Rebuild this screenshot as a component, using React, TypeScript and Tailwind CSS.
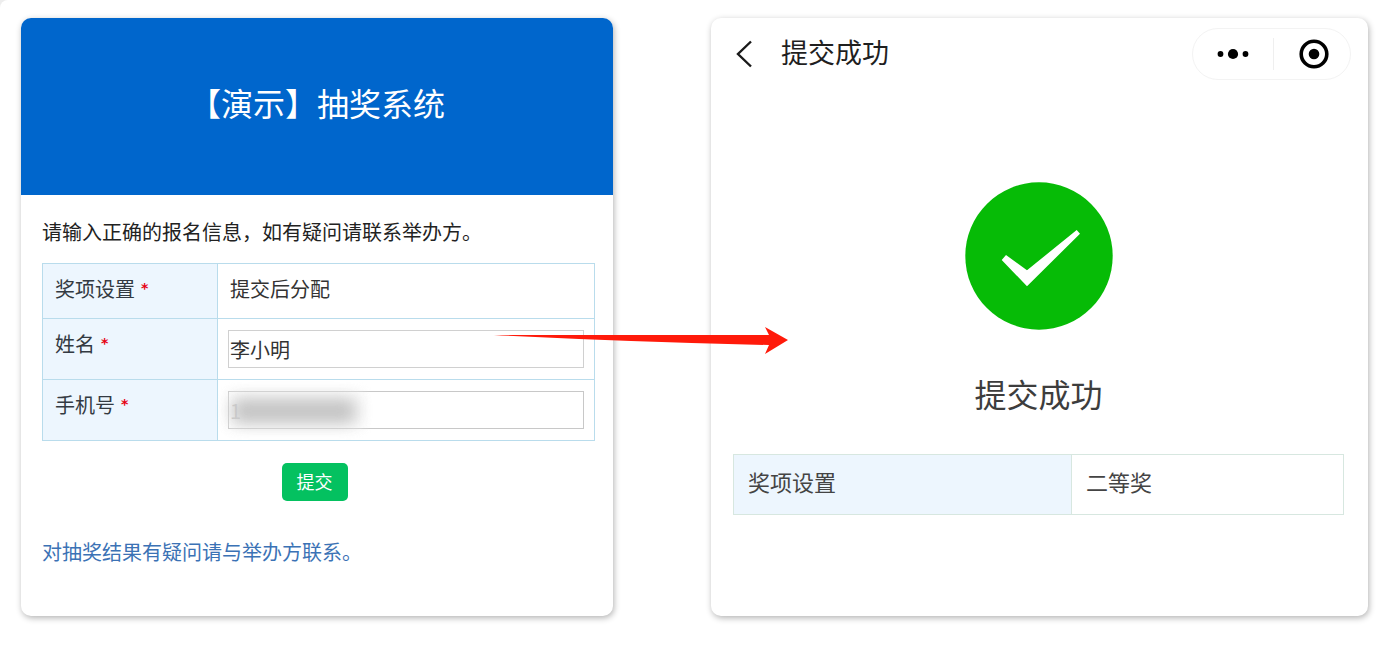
import React, { useState } from 'react';

const CARD =
  'relative rounded-[10px] bg-white shadow-[1px_2px_6px_rgba(0,0,0,0.3)]';

const LABEL_CELL =
  'w-[175px] border border-[#b9dcec] bg-[#edf6fe] pl-3 pt-3 text-left align-top font-normal leading-[26px] text-[#333a42]';

const Required: React.FC = () => (
  <span className="ml-[6px] align-[4px] font-['DejaVu_Sans'] text-[14px] font-bold leading-none text-[#e60012]">
    *
  </span>
);

const Arrow: React.FC = () => (
  <svg
    className="pointer-events-none absolute -right-[175px] top-[308px] z-10"
    width="296"
    height="30"
    viewBox="0 0 296 30"
    aria-hidden="true"
  >
    <path d="M2 9 L277 9 L273 1 L296 14 L273 28 L277 19 Q140 16 2 9Z" fill="#ff1a0a" />
  </svg>
);

const SignupCard: React.FC = () => {
  const [name, setName] = useState('李小明');
  const [phone, setPhone] = useState('1');

  return (
    <section className={CARD}>
      <header className="flex h-[177px] items-center justify-center rounded-t-[10px] bg-[#0066cc] pb-[10px]">
        <h1 className="text-[32px] leading-10 text-white">【演示】抽奖系统</h1>
      </header>

      <form
        className="pb-[49px] pl-[21px] pr-[18px] pt-[22px] text-[20px] leading-[30px]"
        onSubmit={(e) => e.preventDefault()}
      >
        <p className="text-[#222]">请输入正确的报名信息，如有疑问请联系举办方。</p>

        <table className="mt-4 w-full table-fixed border-collapse text-[#333]">
          <tbody>
            <tr className="h-[55px]">
              <th scope="row" className={LABEL_CELL}>
                奖项设置
                <Required />
              </th>
              <td className="border border-[#b9dcec] pl-3 pt-3 align-top leading-[26px]">提交后分配</td>
            </tr>
            <tr className="h-[61px]">
              <th scope="row" className={LABEL_CELL}>
                <label htmlFor="name">姓名</label>
                <Required />
              </th>
              <td className="border border-[#b9dcec] px-[10px] py-[11px]">
                <input
                  id="name"
                  value={name}
                  onChange={(e) => setName(e.target.value)}
                  className="block h-[38px] w-full border border-[#d0d0d0] px-px outline-none"
                />
              </td>
            </tr>
            <tr className="h-[61px]">
              <th scope="row" className={LABEL_CELL}>
                <label htmlFor="phone">手机号</label>
                <Required />
              </th>
              <td className="border border-[#b9dcec] px-[10px] py-[11px]">
                <div className="relative">
                  <input
                    id="phone"
                    type="tel"
                    value={phone}
                    onChange={(e) => setPhone(e.target.value)}
                    className="block h-[38px] w-full border border-[#c8c8c8] px-px text-[#aaa] outline-none"
                  />
                  {/* hides the phone number */}
                  <div className="pointer-events-none absolute left-0 top-0 h-[38px] w-[136px] bg-[#f4f4f4]/60 blur-[5px]" />
                  <div className="pointer-events-none absolute left-1 top-2 h-6 w-[124px] rounded-lg bg-[#bdbdbd] opacity-90 blur-[8px]" />
                </div>
              </td>
            </tr>
          </tbody>
        </table>

        <div className="mt-[22px] flex justify-center pr-2">
          <button
            type="submit"
            className="h-[38px] w-[66px] rounded-[5px] bg-[#04c160] pb-[3px] text-[18px] leading-[26px] text-white"
          >
            提交
          </button>
        </div>

        <p className="mt-9 text-[#3b72b5]">对抽奖结果有疑问请与举办方联系。</p>
      </form>

      <Arrow />
    </section>
  );
};

const ResultCard: React.FC = () => (
  <section className={CARD}>
    <header className="flex items-center pl-6 pr-[17px] pt-[10px]">
      <button type="button" aria-label="返回" className="h-7 w-[18px]">
        <svg width="18" height="28" viewBox="0 0 18 28" fill="none" stroke="#1a1a1a" strokeWidth="2.4">
          <path d="M16 1.5 L3 14 L16 26.5" />
        </svg>
      </button>
      <h2 className="ml-7 pb-1 text-[27px] leading-9 text-[#1f1f1f]">提交成功</h2>
      <div className="ml-auto flex h-[52px] w-[159px] items-center rounded-full border border-[#f3f3f3]">
        <button type="button" aria-label="更多" className="flex w-20 shrink-0 justify-center">
          <svg width="34" height="12" viewBox="0 0 34 12">
            <circle cx="4.5" cy="6" r="2.9" />
            <circle cx="17" cy="6" r="5.1" />
            <circle cx="29.5" cy="6" r="2.9" />
          </svg>
        </button>
        <span className="h-8 w-px bg-[#efefef]" />
        <button type="button" aria-label="关闭" className="flex flex-1 justify-center pl-1">
          <svg width="30" height="30" viewBox="0 0 30 30">
            <circle cx="15" cy="15" r="12.8" fill="none" stroke="#000" strokeWidth="3.6" />
            <circle cx="15" cy="15" r="5.3" />
          </svg>
        </button>
      </div>
    </header>

    <div className="mt-[102px] flex flex-col items-center pr-[2px]">
      <svg width="148" height="148" viewBox="0 0 148 148" aria-hidden="true">
        <circle cx="74" cy="74" r="73.7" fill="#06bb06" />
        <path d="M41 73 L62 88.3 L111.7 48 L115 51.7 L62 104.3 L36.7 78Z" fill="#fff" />
      </svg>
      <p className="mt-[43px] text-[32px] leading-10 text-[#3d3d3d]">提交成功</p>
    </div>

    <div className="mt-[41px] pl-[22px] pr-6">
      <table className="w-full table-fixed border-collapse text-[22px] leading-[30px] text-[#444]">
        <tbody>
          <tr className="h-[60px]">
            <th
              scope="row"
              className="w-[338px] border border-[#d7e7e0] bg-[#edf6fe] px-[14px] pb-2 text-left font-normal"
            >
              奖项设置
            </th>
            <td className="border border-[#d7e7e0] px-[14px] pb-2">二等奖</td>
          </tr>
        </tbody>
      </table>
    </div>
  </section>
);

export default function App() {
  return (
    <div className="bg-[#ededed] font-['Noto_Sans_CJK_SC',sans-serif]">
      <main className="grid grid-cols-[592fr_657fr] gap-[98px] rounded-tl-[8px] bg-white pb-[31px] pl-[21px] pr-[14px] pt-[18px]">
        <SignupCard />
        <ResultCard />
      </main>
    </div>
  );
}
